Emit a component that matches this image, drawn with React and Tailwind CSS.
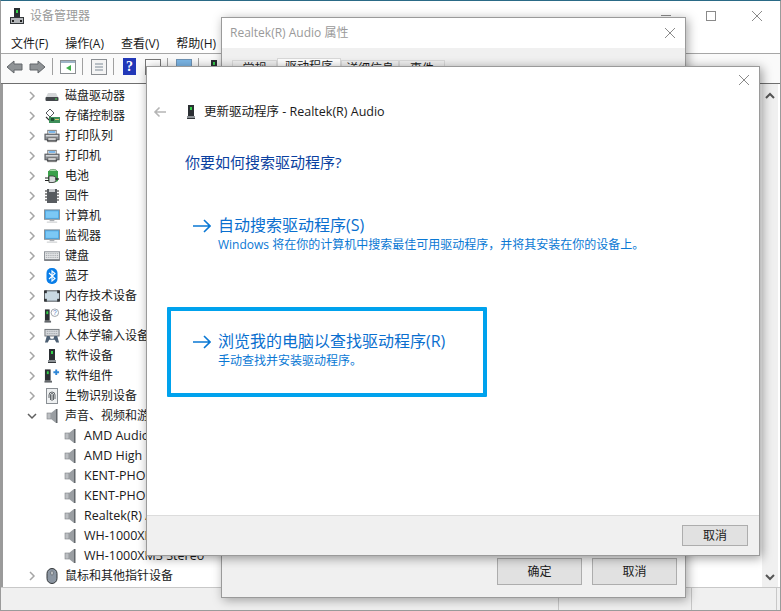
const cjk = "font-['Segoe_UI','Open_Sans','Noto_Sans_CJK_SC',sans-serif]";

function DeviceTower({ className = '' }) {
  return (
    <svg width="16" height="16" viewBox="0 0 16 16" className={className}>
      <rect x="5" y="1" width="6" height="11" fill="#2b2f33" />
      <rect x="7" y="3" width="2" height="3" fill="#35d04a" />
      <rect x="4" y="12" width="8" height="3" fill="#8d9296" />
      <rect x="4" y="14" width="8" height="1" fill="#33373a" />
    </svg>
  );
}

function TitleIcon() {
  return (
    <svg width="14" height="16" viewBox="0 0 14 16">
      <rect x="4" y="0" width="6" height="9" fill="#2b2f33" />
      <rect x="6" y="2" width="2" height="3" fill="#35d04a" />
      <rect x="0.5" y="9.5" width="13" height="6" fill="#b4b7ba" stroke="#33373a" />
      <rect x="2" y="12" width="2" height="2" fill="#222" />
      <rect x="10" y="12" width="2" height="2" fill="#222" />
    </svg>
  );
}

function Disk() {
  return (
    <svg width="16" height="16" viewBox="0 0 16 16">
      <path d="M2 9 L4 5 H12 L14 9Z" fill="#d4d6d8" />
      <rect x="1.5" y="9" width="13" height="4" rx="1" fill="#43474b" />
      <rect x="11" y="10.5" width="2" height="1" fill="#4ade5a" />
    </svg>
  );
}

function Storage() {
  return (
    <svg width="16" height="16" viewBox="0 0 16 16">
      <path d="M2 5 L6 1 L10 5 L6 9Z" fill="#fff" stroke="#55595d" />
      <path d="M2 9 L5 12 H7" fill="none" stroke="#333" strokeWidth="1.2" />
      <rect x="5" y="9" width="11" height="6" fill="#3f8f5a" />
      <rect x="7" y="10" width="3" height="3" fill="#1e4d30" />
      <rect x="11" y="11" width="4" height="1" fill="#d9c36a" />
    </svg>
  );
}

function Printer() {
  return (
    <svg width="17" height="16" viewBox="0 0 17 16">
      <rect x="4" y="2" width="9" height="5" fill="#fff" stroke="#777" />
      <rect x="5" y="3" width="7" height="1.5" fill="#4a9be0" />
      <rect x="1" y="6" width="15" height="6" fill="#8b9095" stroke="#55595d" />
      <rect x="2" y="7" width="13" height="1.5" fill="#d8dadd" />
      <rect x="4" y="10" width="9" height="4" fill="#fff" stroke="#666" />
      <rect x="3" y="12" width="11" height="1" fill="#2b2f33" />
    </svg>
  );
}

function Battery() {
  return (
    <svg width="16" height="16" viewBox="0 0 16 16">
      <ellipse cx="9" cy="3" rx="4" ry="1.6" fill="#a6dca8" stroke="#3f7a45" strokeWidth=".6" />
      <path d="M4 3 H14 V13 Q9 16 4 13Z" fill="#3aa04a" />
      <path d="M1 10 H5 M1 12.5 H5" stroke="#222" strokeWidth="1" />
      <path d="M5 8 H9 A3 3 0 0 1 9 14.5 H5Z" fill="#d5d8da" stroke="#333" strokeWidth=".8" />
      <path d="M11 11 H15" stroke="#222" strokeWidth="1.2" />
    </svg>
  );
}

function Chip() {
  return (
    <svg width="16" height="16" viewBox="0 0 16 16">
      <rect x="3" y="1" width="10" height="14" fill="#585c60" />
      <rect x="5" y="1" width="6" height="3" fill="#c6c9cc" />
      <path d="M1 3 H3 M1 6 H3 M1 9 H3 M1 12 H3 M13 3 H15 M13 6 H15 M13 9 H15 M13 12 H15" stroke="#222" />
    </svg>
  );
}

function Monitor() {
  return (
    <svg width="17" height="16" viewBox="0 0 17 16">
      <rect x="0.5" y="1.5" width="16" height="10" fill="#4aa8e6" stroke="#8a8f94" />
      <rect x="2" y="3" width="13" height="7" fill="#7cc8f5" />
      <rect x="6" y="12" width="5" height="1.5" fill="#a8acb0" />
      <rect x="3" y="14" width="11" height="1" fill="#c4c7ca" />
    </svg>
  );
}

function Keyboard() {
  return (
    <svg width="17" height="16" viewBox="0 0 17 16">
      <rect x="0.5" y="3.5" width="16" height="9" fill="#e4e6e8" stroke="#8a8f94" />
      <path d="M2 5.5 H15 M2 7.5 H15 M2 9.5 H15" stroke="#9a9ea2" strokeDasharray="1 1" />
      <rect x="0.5" y="11.5" width="16" height="1.5" fill="#6f7377" />
    </svg>
  );
}

function BluetoothIcon() {
  return (
    <svg width="16" height="16" viewBox="0 0 16 16">
      <rect x="2.5" y="0" width="11" height="16" rx="5" fill="#0a7ee8" />
      <path d="M5 5 L11 10.5 L8 13 V3 L11 5.5 L5 11" fill="none" stroke="#fff" strokeWidth="1.1" />
    </svg>
  );
}

function Memory() {
  return (
    <svg width="17" height="16" viewBox="0 0 17 16">
      <rect x="0.5" y="2.5" width="16" height="11" rx="1.5" fill="#c9d9e2" stroke="#4a4e52" />
      <rect x="0" y="2" width="3" height="3" fill="#33373a" />
      <rect x="14" y="2" width="3" height="3" fill="#33373a" />
      <rect x="0" y="11" width="3" height="3" fill="#33373a" />
      <rect x="14" y="11" width="3" height="3" fill="#33373a" />
    </svg>
  );
}

function OtherDevice() {
  return (
    <svg width="17" height="16" viewBox="0 0 17 16">
      <rect x="1" y="1" width="5" height="12" fill="#2b2f33" />
      <rect x="2.5" y="3" width="2" height="3" fill="#35d04a" />
      <rect x="0.5" y="13" width="7" height="2" fill="#63676b" />
      <circle cx="11.5" cy="4.5" r="4" fill="#fff" stroke="#9aa0a6" />
      <text x="11.5" y="7" textAnchor="middle" fontSize="7" fill="#4a79c4" fontFamily="Liberation Sans">?</text>
    </svg>
  );
}

function Hid() {
  return (
    <svg width="17" height="16" viewBox="0 0 17 16">
      <rect x="1" y="1" width="15" height="7" fill="#d7dadd" stroke="#6f7377" />
      <path d="M3 3 H14 M3 5.5 H14" stroke="#8a8f94" strokeDasharray="1 1" />
      <path d="M1 15 L3 8 H6 L7 11 H10 L11 8 H14 L16 15 H13 L11.5 12 H5.5 L4 15Z" fill="#4c5f73" />
    </svg>
  );
}

function SoftComponent() {
  return (
    <svg width="17" height="16" viewBox="0 0 17 16">
      <rect x="1" y="1" width="6" height="12" fill="#2b2f33" />
      <rect x="3" y="3" width="2" height="3" fill="#35d04a" />
      <rect x="0.5" y="13" width="8" height="2" fill="#63676b" />
      <path d="M10 3 H12 V1 H14 V3 H16 V5 H14 V7 H12 V5 H10Z" fill="#2f86d6" />
    </svg>
  );
}

function Fingerprint() {
  return (
    <svg width="16" height="16" viewBox="0 0 16 16">
      <rect x="2.5" y="0.5" width="11" height="15" fill="#eef0f1" stroke="#8a8f94" />
      <path d="M5 10 V7 A3 3 0 0 1 11 7 V11 M6.5 12 V7 A1.5 1.5 0 0 1 9.5 7 V12 M8 7 V13" fill="none" stroke="#62666a" />
    </svg>
  );
}

function Speaker() {
  return (
    <svg width="16" height="16" viewBox="0 0 16 16">
      <rect x="3" y="5" width="4" height="6" fill="#bcbfc2" stroke="#7d8185" strokeWidth=".6" />
      <path d="M7 5 L12 1 V15 L7 11Z" fill="#9a9ea2" />
      <path d="M12 1 H13.5 V15 H12Z" fill="#63676b" />
    </svg>
  );
}

function MouseIcon() {
  return (
    <svg width="16" height="16" viewBox="0 0 16 16">
      <rect x="3" y="0.5" width="10" height="15" rx="5" fill="#8c96a2" stroke="#33373a" />
      <rect x="7" y="3" width="2" height="4" rx="1" fill="#e8eaec" stroke="#33373a" strokeWidth=".5" />
    </svg>
  );
}

function Chevron({ open }) {
  return (
    <svg width="10" height="10" viewBox="0 0 10 10" className="shrink-0">
      {open
        ? <path d="M1 3 L5 7 L9 3" fill="none" stroke="#5f5f5f" strokeWidth="1.5" />
        : <path d="M3 1 L7 5 L3 9" fill="none" stroke="#a6a6a6" strokeWidth="1.5" />}
    </svg>
  );
}

const categories = [
  ['磁盘驱动器', <Disk />],
  ['存储控制器', <Storage />],
  ['打印队列', <Printer />],
  ['打印机', <Printer />],
  ['电池', <Battery />],
  ['固件', <Chip />],
  ['计算机', <Monitor />],
  ['监视器', <Monitor />],
  ['键盘', <Keyboard />],
  ['蓝牙', <BluetoothIcon />],
  ['内存技术设备', <Memory />],
  ['其他设备', <OtherDevice />],
  ['人体学输入设备', <Hid />],
  ['软件设备', <DeviceTower />],
  ['软件组件', <SoftComponent />],
  ['生物识别设备', <Fingerprint />],
];

const audio = [
  'AMD Audio Device',
  'AMD High Definition Audio Device',
  'KENT-PHONE Hands-Free',
  'KENT-PHONE Stereo',
  'Realtek(R) Audio',
  'WH-1000XM3 Hands-Free',
  'WH-1000XM3 Stereo',
];

function Row({ label, icon, open, child }) {
  return (
    <div className={`flex h-5 items-center whitespace-nowrap ${child ? 'pl-[59px]' : 'pl-[24px]'}`}>
      {!child && <Chevron open={open} />}
      <span className={`flex w-4 justify-center ${child ? '' : 'ml-[7px]'}`}>{icon}</span>
      <span className={`${child ? 'ml-1.5 text-[12.5px]' : 'ml-[5px] text-xs'} text-[#1a1a1a]`}>{label}</span>
    </div>
  );
}

function ToolArrow({ flip, className = '' }) {
  return (
    <svg width="17" height="14" viewBox="0 0 17 14" className={`${flip ? 'scale-x-[-1]' : ''} ${className}`}>
      <path d="M1 7 L8 1 V4 H16 V10 H8 V13Z" fill="#8f9396" stroke="#62666a" />
    </svg>
  );
}

function Sep({ className = '' }) {
  return <span className={`h-[17px] w-px bg-[#a0a0a0] ${className}`} />;
}

function Toolbar() {
  return (
    <div className="flex h-[30px] shrink-0 items-center border-b border-[#6f6f6f] bg-[#fafafa] pb-[4px] pl-[5px]">
      <ToolArrow />
      <ToolArrow flip className="ml-[6px]" />
      <Sep className="ml-[6px]" />
      <svg width="16" height="14" viewBox="0 0 16 14" className="ml-[7px]">
        <rect x=".5" y=".5" width="15" height="13" fill="#fff" stroke="#8b8f93" />
        <rect x="1" y="1" width="14" height="2" fill="#9fb4c6" />
        <path d="M11 5 L6 8 L11 11Z" fill="#3fae49" />
      </svg>
      <Sep className="ml-[6px]" />
      <svg width="16" height="16" viewBox="0 0 16 16" className="ml-[8px]">
        <rect x=".5" y=".5" width="15" height="15" fill="#f4f4f4" stroke="#8b8f93" />
        <path d="M4 5 H12 M4 8 H12 M4 11 H12" stroke="#7c8a96" />
      </svg>
      <Sep className="ml-[6px]" />
      <span className="ml-[9px] flex h-[17px] w-[13px] items-center justify-center bg-[#2238b8] font-['Liberation_Serif',serif] text-sm font-bold text-white">?</span>
      <span className="ml-[9px] h-4 w-4 border border-[#777] bg-white" />
      <Sep className="ml-[6px]" />
      <span className="ml-[8px] h-4 w-4 border border-[#6f93b5] bg-[#7cb6e6]" />
      <Sep className="ml-[6px]" />
      <DeviceTower className="ml-[7px]" />
    </div>
  );
}

function WinButton({ children, className = '' }) {
  return (
    <button className={`border border-[#adadad] bg-[#e1e1e1] text-xs text-[#1a1a1a] ${className}`}>
      {children}
    </button>
  );
}

function CloseX({ className = '' }) {
  return (
    <svg width="12" height="12" viewBox="0 0 12 12" className={className}>
      <path d="M1 1 L11 11 M11 1 L1 11" stroke="#8a8a8a" strokeWidth="1" />
    </svg>
  );
}

function LinkArrow() {
  return (
    <svg width="18" height="14" viewBox="0 0 18 14" className="mt-[5px] shrink-0">
      <path d="M0 7 H17 M11 1 L17 7 L11 13" fill="none" stroke="#0a78d4" strokeWidth="1.6" />
    </svg>
  );
}

function CommandLink({ title, desc }) {
  return (
    <div className="flex gap-[7px]">
      <LinkArrow />
      <div>
        <div className="text-base leading-[22px] text-[#0a6fcf]">{title}</div>
        <div className="mt-[1px] text-xs leading-[16px] text-[#0a78d4]">{desc}</div>
      </div>
    </div>
  );
}

function Tab({ label, active, className = '' }) {
  return (
    <div className={`border border-b-0 border-[#d9d9d9] text-center text-xs text-[#1a1a1a] ${active ? 'h-[22px] bg-white' : 'mt-[2px] h-[20px] bg-[#f0f0f0]'} ${className}`}>
      {label}
    </div>
  );
}

export default function App() {
  return (
    <div className={`relative h-[611px] w-[781px] overflow-hidden bg-white ${cjk}`}>
      {/* device manager */}
      <div className="flex h-full flex-col border border-[#9b9b9b] border-t-[#2a6a86]">
        <div className="flex h-[29px] shrink-0 items-center pl-[9px]">
          <TitleIcon />
          <span className="ml-[6px] text-xs text-[#9a9a9a]">设备管理器</span>
          <div className="ml-auto flex items-center">
            <span className="mr-[35px] h-px w-[10px] bg-[#8a8a8a]" />
            <span className="mr-[35px] h-[10px] w-[10px] border border-[#8a8a8a]" />
            <CloseX className="mr-[17px]" />
          </div>
        </div>
        <div className="flex h-[24px] shrink-0 items-center gap-[17px] border-b border-[#a6a6a6] pl-[10px] pt-[5px] text-xs text-[#1a1a1a]">
          <span>文件(F)</span>
          <span>操作(A)</span>
          <span>查看(V)</span>
          <span>帮助(H)</span>
        </div>
        <Toolbar />
        <div className="flex min-h-0 flex-1 border-l-2 border-l-[#9a9a9a]">
          <div className="min-w-0 flex-1 overflow-hidden pt-[2px]">
            {categories.map(([label, icon]) => <Row key={label} label={label} icon={icon} />)}
            <Row open label="声音、视频和游戏控制器" icon={<Speaker />} />
            {audio.map(name => <Row key={name} child label={name} icon={<Speaker />} />)}
            <Row label="鼠标和其他指针设备" icon={<MouseIcon />} />
          </div>
          <div className="mr-[2px] flex w-[16px] shrink-0 flex-col items-center justify-between bg-[#f0f0f0] pb-1.5 pt-[8px]">
            <svg width="10" height="7" viewBox="0 0 10 7"><path d="M1 6 L5 2 L9 6" fill="none" stroke="#555" strokeWidth="2" /></svg>
            <svg width="10" height="7" viewBox="0 0 10 7"><path d="M1 1 L5 5 L9 1" fill="none" stroke="#555" strokeWidth="2" /></svg>
          </div>
        </div>
        <div className="flex h-[23px] shrink-0 border-t border-[#c8c8c8] bg-[#f0f0f0]">
          <span className="w-[558px] border-r border-[#c8c8c8]" />
          <span className="w-[133px] border-r border-[#c8c8c8]" />
          <span className="w-[85px] border-r border-[#c8c8c8]" />
        </div>
      </div>

      {/* properties dialog */}
      <div className="absolute left-[221px] top-[17px] flex h-[581px] w-[465px] flex-col border border-[#9a9a9a] bg-[#f0f0f0] shadow-[2px_2px_10px_rgba(0,0,0,0.35)]">
        <div className="flex h-[30px] shrink-0 items-center justify-between bg-white pl-2 pr-[9px]">
          <span className="text-xs text-[#9a9a9a]">Realtek(R) Audio 属性</span>
          <CloseX />
        </div>
        <div className="ml-[10px] mt-[10px] flex shrink-0">
          <Tab label="常规" className="w-[45px]" />
          <Tab active label="驱动程序" className="w-[64px]" />
          <Tab label="详细信息" className="w-[58px]" />
          <Tab label="事件" className="w-[46px]" />
        </div>
        <div className="flex-1" />
        <div className="flex shrink-0 justify-end gap-[10px] pb-[12px] pr-[8px]">
          <WinButton className="h-[27px] w-[85px]">确定</WinButton>
          <WinButton className="h-[27px] w-[85px]">取消</WinButton>
        </div>
      </div>

      {/* update driver wizard */}
      <div className="absolute left-[146px] top-[66px] flex h-[490px] w-[614px] flex-col border border-[#9a9a9a] bg-white shadow-[2px_2px_10px_rgba(0,0,0,0.4)]">
        <div className="flex justify-end pr-[9px] pt-[7px]">
          <CloseX />
        </div>
        <div className="mt-[16px] flex h-5 items-center pl-[6px]">
          <svg width="14" height="12" viewBox="0 0 14 12">
            <path d="M13 6 H2 M6.5 1.5 L2 6 L6.5 10.5" fill="none" stroke="#b5b5b5" strokeWidth="1.6" />
          </svg>
          <DeviceTower className="ml-[16px]" />
          <span className="ml-[5px] text-[12.5px] text-[#1a1a1a]">更新驱动程序 - Realtek(R) Audio</span>
        </div>
        <h1 className="ml-[38px] mt-[30px] text-[15px] font-normal leading-[20px] text-[#0a3fa0]">你要如何搜索驱动程序?</h1>
        <div className="ml-[46px] mt-[42px]">
          <CommandLink
            title="自动搜索驱动程序(S)"
            desc="Windows 将在你的计算机中搜索最佳可用驱动程序，并将其安装在你的设备上。"
          />
        </div>
        <div className="ml-[20px] mt-[54px] flex h-[90px] w-[320px] items-center rounded-[1px] border-[4px] border-[#00a2ed] pb-[6px] pl-[22px]">
          <CommandLink title="浏览我的电脑以查找驱动程序(R)" desc="手动查找并安装驱动程序。" />
        </div>
        <div className="mt-auto flex h-[40px] items-center justify-end border-t border-[#dcdcdc] bg-[#f0f0f0] pr-[11px]">
          <WinButton className="h-[21px] w-[66px]">取消</WinButton>
        </div>
      </div>
    </div>
  );
}
